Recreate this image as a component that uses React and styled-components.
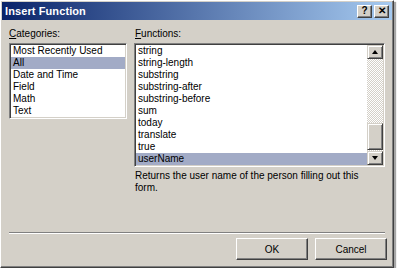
import React from "react";
import styled, { createGlobalStyle } from "styled-components";

const GlobalStyle = createGlobalStyle`
  html, body {
    margin: 0;
    padding: 0;
    background: #ffffff;
  }
  body {
    font-family: "Liberation Sans", Arial, sans-serif;
    font-size: 10px;
    color: #000;
  }
`;

const Dialog = styled.div`
  box-sizing: border-box;
  width: 394px;
  height: 268px;
  display: flex;
  flex-direction: column;
  background: #d4d0c8;
  border: 1px solid;
  border-color: #ffffff #404040 #404040 #ffffff;
  box-shadow: inset -1px -1px #808080, 2px 2px 1px rgba(0, 0, 0, 0.35);
  padding: 1px;
`;

const TitleBar = styled.div`
  height: 18px;
  display: flex;
  align-items: center;
  padding: 0 3px 0 3px;
  background: linear-gradient(to right, #0a246a, #a6caf0);
  color: #fff;
  font-weight: bold;
  font-size: 11px;
`;

const TitleText = styled.span`
  flex: 1;
  letter-spacing: 0.1px;
`;

const TitleButton = styled.button`
  box-sizing: border-box;
  width: 15px;
  height: 13px;
  margin-left: ${(p) => (p.$gap ? "2px" : "0")};
  padding: 0;
  display: flex;
  align-items: center;
  justify-content: center;
  background: #d4d0c8;
  border: 1px solid;
  border-color: #ffffff #404040 #404040 #ffffff;
  box-shadow: inset -1px -1px #808080;
  color: #000;
  font-family: "Liberation Sans", Arial, sans-serif;
  font-weight: bold;
  font-size: 10px;
  line-height: 1;
`;

const Content = styled.div`
  display: grid;
  grid-template-columns: 118px 251px;
  column-gap: 7px;
  padding: 8px 0 0 7px;
`;

const Column = styled.div`
  display: flex;
  flex-direction: column;
`;

const Label = styled.div`
  height: 12px;
  line-height: 12px;
  margin-bottom: 3px;
  padding-left: ${(p) => (p.$shift ? "1px" : "0")};
`;

const ListBox = styled.div`
  box-sizing: border-box;
  height: ${(p) => p.$height}px;
  display: flex;
  background: #fff;
  border: 1px solid;
  border-color: #808080 #ffffff #ffffff #808080;
  box-shadow: inset 1px 1px #404040, inset -1px -1px #d4d0c8;
  padding: 1px;
`;

const Items = styled.div`
  flex: 1;
  display: flex;
  flex-direction: column;
`;

const Item = styled.div`
  height: 12px;
  line-height: 12px;
  padding-left: 2px;
  white-space: nowrap;
  background: ${(p) => (p.$selected ? "#a2abc6" : "transparent")};
`;

const ScrollBar = styled.div`
  width: 16px;
  display: flex;
  flex-direction: column;
  background: repeating-conic-gradient(#d4d0c8 0 25%, #ffffff 0 50%) 0 0 / 2px 2px;
`;

const ScrollButton = styled.div`
  box-sizing: border-box;
  height: 14px;
  display: flex;
  align-items: center;
  justify-content: center;
  background: #d4d0c8;
  border: 1px solid;
  border-color: #d4d0c8 #404040 #404040 #d4d0c8;
  box-shadow: inset 1px 1px #fff, inset -1px -1px #808080;
`;

const Arrow = styled.span`
  width: 0;
  height: 0;
  border-left: 3.5px solid transparent;
  border-right: 3.5px solid transparent;
  ${(p) =>
    p.$down
      ? "border-top: 4px solid #000;"
      : "border-bottom: 4px solid #000;"}
`;

const Track = styled.div`
  flex: 1;
  display: flex;
  flex-direction: column;
  justify-content: flex-end;
  padding-bottom: 1px;
`;

const Thumb = styled.div`
  box-sizing: border-box;
  height: 27px;
  background: #d4d0c8;
  border: 1px solid;
  border-color: #d4d0c8 #404040 #404040 #d4d0c8;
  box-shadow: inset 1px 1px #fff, inset -1px -1px #808080;
`;

const Description = styled.div`
  margin-top: 3px;
  padding-left: 1px;
  line-height: 12px;
  width: 240px;
`;

const Footer = styled.div`
  margin-top: auto;
  display: flex;
  flex-direction: column;
  padding: 0 5px 6px 7px;
`;

const Separator = styled.div`
  height: 1px;
  margin-right: 2px;
  background: #808080;
  border-bottom: 1px solid #fff;
`;

const ButtonRow = styled.div`
  display: flex;
  justify-content: flex-end;
  gap: 7px;
  margin-top: 4px;
`;

const Button = styled.button`
  box-sizing: border-box;
  width: 72px;
  height: 22px;
  padding: 0;
  background: #d4d0c8;
  border: 1px solid;
  border-color: #ffffff #404040 #404040 #ffffff;
  box-shadow: inset -1px -1px #808080;
  font-family: "Liberation Sans", Arial, sans-serif;
  font-size: 10px;
  color: #000;
`;

const categories = ["Most Recently Used", "All", "Date and Time", "Field", "Math", "Text"];
const functions = [
  "string",
  "string-length",
  "substring",
  "substring-after",
  "substring-before",
  "sum",
  "today",
  "translate",
  "true",
  "userName",
];

export default function App() {
  return (
    <>
      <GlobalStyle />
      <Dialog>
        <TitleBar>
          <TitleText>Insert Function</TitleText>
          <TitleButton>?</TitleButton>
          <TitleButton $gap>✕</TitleButton>
        </TitleBar>
        <Content>
          <Column>
            <Label>
              <u>C</u>ategories:
            </Label>
            <ListBox $height={76}>
              <Items>
                {categories.map((c) => (
                  <Item key={c} $selected={c === "All"}>
                    {c}
                  </Item>
                ))}
              </Items>
            </ListBox>
          </Column>
          <Column>
            <Label $shift>
              <u>F</u>unctions:
            </Label>
            <ListBox $height={124}>
              <Items>
                {functions.map((f) => (
                  <Item key={f} $selected={f === "userName"}>
                    {f}
                  </Item>
                ))}
              </Items>
              <ScrollBar>
                <ScrollButton>
                  <Arrow />
                </ScrollButton>
                <Track>
                  <Thumb />
                </Track>
                <ScrollButton>
                  <Arrow $down />
                </ScrollButton>
              </ScrollBar>
            </ListBox>
            <Description>
              Returns the user name of the person filling out this form.
            </Description>
          </Column>
        </Content>
        <Footer>
          <Separator />
          <ButtonRow>
            <Button>OK</Button>
            <Button>Cancel</Button>
          </ButtonRow>
        </Footer>
      </Dialog>
    </>
  );
}
